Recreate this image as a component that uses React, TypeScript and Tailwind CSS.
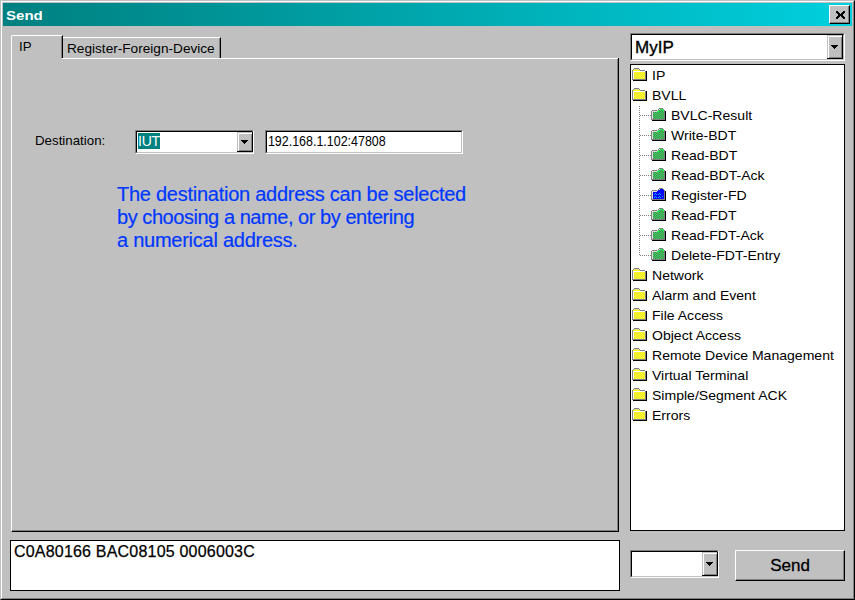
import type { ReactNode } from "react";

type Kind = "yellow" | "green" | "blue";

const tree: { label: string; kind: Kind }[] = [
  { label: "IP", kind: "yellow" },
  { label: "BVLL", kind: "yellow" },
  { label: "BVLC-Result", kind: "green" },
  { label: "Write-BDT", kind: "green" },
  { label: "Read-BDT", kind: "green" },
  { label: "Read-BDT-Ack", kind: "green" },
  { label: "Register-FD", kind: "blue" },
  { label: "Read-FDT", kind: "green" },
  { label: "Read-FDT-Ack", kind: "green" },
  { label: "Delete-FDT-Entry", kind: "green" },
  { label: "Network", kind: "yellow" },
  { label: "Alarm and Event", kind: "yellow" },
  { label: "File Access", kind: "yellow" },
  { label: "Object Access", kind: "yellow" },
  { label: "Remote Device Management", kind: "yellow" },
  { label: "Virtual Terminal", kind: "yellow" },
  { label: "Simple/Segment ACK", kind: "yellow" },
  { label: "Errors", kind: "yellow" },
];

// Every second pixel of a rectangle, as one path.
function checker(x0: number, y0: number, x1: number, y1: number) {
  let d = "";
  for (let y = y0; y < y1; y++) {
    for (let x = x0; x < x1; x++) {
      if ((x + y) % 2 === 0) d += `M${x} ${y}h1v1h-1z`;
    }
  }
  return d;
}

const yellowDither = checker(2, 4, 13, 11);
const greenDither = checker(2, 4, 13, 11) + checker(8, 2, 12, 4);

function Folder({ kind }: { kind: Kind }) {
  if (kind === "yellow") {
    return (
      <svg width="15" height="13" viewBox="0 0 15 13" shapeRendering="crispEdges" className="-mt-[2px] shrink-0">
        <path fill="#ffff00" d="M1 2h1v-1h5v1h1v1h6v9h-13z" />
        <path fill="#e8e850" d={yellowDither} />
        <path fill="#808080" d="M2 0h5v1h-5zM1 1h1v1h-1zM7 1h1v1h-1zM8 2h5v1h-5zM0 2h1v9h-1zM13 3h1v8h-1z" />
        <path fill="#fff" d="M1 3h1v8h-1zM2 3h11v1h-11z" />
        <path fill="#e0e080" d="M2 1h5v1h-5z" />
        <path fill="#000" d="M14 3h1v10h-14v-1h13z" />
        <path fill="#808080" d="M0 11h14v1h-14z" />
      </svg>
    );
  }
  return (
    <svg width="15" height="13" viewBox="0 0 15 13" shapeRendering="crispEdges" className="-mt-[2px] shrink-0">
      <path fill={kind === "blue" ? "#0000ff" : "#20f050"} d="M1 4h5v-1h1v-1h1v-1h4v1h1v1h1v8h-13z" />
      {kind === "green" && <path fill="#607060" d={greenDither} />}
      <path fill="#808080" d="M8 0h4v1h-4zM7 1h1v1h-1zM12 1h1v1h-1zM1 2h6v1h-6zM0 3h1v8h-1zM13 2h1v9h-1z" />
      <path fill="#e0e0e0" d="M1 3h5v1h-5zM1 4h1v7h-1zM6 2h1v1h-1zM7 2h1v-1h1v1h-1z" />
      {kind === "blue" && (
        <path fill="#00b0ff" d="M3 6h1v-1h1v1h1v1h-1v-1h-1v1h-1zM7 6h1v-1h1v1h1v1h-1v-1h-1v1h-1zM3 9h1v-1h1v1h1v1h-1v-1h-1v1h-1zM7 9h1v-1h1v1h1v1h-1v-1h-1v1h-1zM11 8h1v1h-1z" />
      )}
      <path fill="#000" d="M14 3h1v10h-14v-1h13z" />
      <path fill="#808080" d="M0 11h14v1h-14z" />
    </svg>
  );
}

function ArrowButton({ className = "-mr-px" }: { className?: string }) {
  return (
    <div
      className={`flex w-4 shrink-0 items-center justify-center border-r border-b border-black bg-[#c0c0c0] shadow-[inset_1px_1px_0_#c0c0c0,inset_2px_2px_0_#fff,inset_-1px_-1px_0_#808080] ${className}`}
    >
      <svg width="7" height="4" viewBox="0 0 7 4" shapeRendering="crispEdges">
        <path d="M0 0h7v1h-1v1h-1v1h-1v1h-1v-1h-1v-1h-1v-1h-1z" />
      </svg>
    </div>
  );
}

function Sunken({ className, children }: { className: string; children?: ReactNode }) {
  return (
    <div className={`border border-t-[#808080] border-l-[#808080] border-r-white border-b-white ${className}`}>
      <div className="flex h-full border border-t-black border-l-black border-r-[#c0c0c0] border-b-[#c0c0c0] bg-white">
        {children}
      </div>
    </div>
  );
}

export default function App() {
  return (
    <div className="h-[600px] w-[855px] overflow-hidden border-t border-l border-r border-b border-t-[#c0c0c0] border-l-[#c0c0c0] border-r-black border-b-black bg-[#c0c0c0] font-['Liberation_Sans',Arial,sans-serif] text-black">
      <div className="flex h-full flex-col border border-t-white border-l-white border-r-[#808080] border-b-[#808080] pt-px pl-px">
        <header className="mr-px flex h-[23px] shrink-0 items-center justify-between bg-linear-to-r from-[#008080] to-[#00d0de] pr-[2px] pl-[3px]">
          <span className="mt-[3px] origin-left scale-x-[1.13] text-[13.3px] leading-4 font-bold text-white">Send</span>
          <button className="-mt-px flex h-[19px] w-[21px] items-center justify-center border border-t-white border-l-white border-r-black border-b-black bg-[#c0c0c0] shadow-[inset_-1px_-1px_0_#808080]">
            <svg width="9" height="8" viewBox="0 0 9 8" shapeRendering="crispEdges" className="mt-px ml-px">
              <path d="M0 0h2v1h1v1h1v1h1v-1h1v-1h1v-1h2v2h-1v1h-1v2h1v1h1v2h-2v-1h-1v-1h-1v-1h-1v1h-1v1h-1v1h-2v-2h1v-1h1v-2h-1v-1h-1z" />
            </svg>
          </button>
        </header>

        <div className="flex flex-1 pl-[7px]">
          <main className="w-[610px] shrink-0 pt-[9px]">
            <div className="ml-px flex h-[23px] w-[608px] items-end text-[13.3px]">
              <div className="h-[23px] w-[52px] rounded-tl-[2px] border-t border-r border-l border-t-white border-l-white border-r-black pl-[7px] shadow-[inset_-1px_0_0_#808080]">
                <span className="block pt-[3px] leading-4">IP</span>
              </div>
              <div className="h-[21px] w-[158px] border-t border-r border-t-white border-r-black pl-[4px] shadow-[inset_-1px_0_0_#808080]">
                <span className="block origin-left scale-x-[1.025] pt-[3px] leading-4 whitespace-nowrap">Register-Foreign-Device</span>
              </div>
            </div>
            <section className="ml-px flex h-[474px] w-[608px] flex-col border-r border-b border-l border-l-white border-r-black border-b-black shadow-[inset_-1px_-1px_0_#808080]">
              <div className="ml-[50px] h-px shrink-0 bg-white" />
              <div className="mt-[71px] flex h-6 pl-[23px]">
                <label className="w-[100px] pt-[3px] text-[13.3px] leading-4">
                  Destination:
                </label>
                <Sunken className="w-[119px]">
                  <div className="flex-1 pt-px pl-px">
                    <span className="block h-4 w-[22px] bg-[#008080] text-[14px] leading-4 tracking-[-0.2px] text-white">IUT</span>
                  </div>
                  <ArrowButton />
                </Sunken>
                <Sunken className="ml-[11px] w-[198px]">
                  <span className="origin-left scale-x-[0.89] pt-px pl-px text-[14px] leading-4">192.168.1.102:47808</span>
                </Sunken>
              </div>
              <div className="mt-[29px] ml-[105px] text-[20px] leading-[23px] whitespace-nowrap text-[#0038ff] [-webkit-text-stroke:0.2px_#0038ff]">
                <p className="tracking-[-0.26px]">The destination address can be selected</p>
                <p className="tracking-[-0.45px]">by choosing a name, or by entering</p>
                <p className="tracking-[-0.25px]">a numerical address.</p>
              </div>
            </section>
            <div className="mt-2 h-[51px] w-[610px] border border-black bg-white pt-[3px] pl-[3px]">
              <span className="block text-[16px] leading-4 tracking-[0.2px] [-webkit-text-stroke:0.25px_black]">C0A80166 BAC08105 0006003C</span>
            </div>
          </main>

          <aside className="ml-[10px] w-[215px] shrink-0 pt-[7px]">
            <Sunken className="h-7 w-[215px]">
              <span className="flex-1 pt-[3px] pl-[3px] text-[17px] leading-5 [-webkit-text-stroke:0.35px_black]">MyIP</span>
              <ArrowButton className="mr-0" />
            </Sunken>
            <div className="relative mt-[3px] h-[467px] border border-black bg-white">
              <div className="absolute top-[41px] left-[8px] h-[150px] w-px bg-[repeating-linear-gradient(to_bottom,#808080_0_1px,transparent_1px_2px)]" />
              {tree.map((item) => (
                <div key={item.label} className="flex h-5 items-center pl-px">
                  {item.kind !== "yellow" && (
                    <span className="ml-[8px] h-px w-[11px] bg-[repeating-linear-gradient(to_right,#808080_0_1px,transparent_1px_2px)]" />
                  )}
                  <Folder kind={item.kind} />
                  <span className="mt-[2px] ml-[5px] origin-left scale-x-[1.056] text-[13.3px] leading-4 whitespace-nowrap">{item.label}</span>
                </div>
              ))}
            </div>
            <div className="mt-[19px] flex justify-between">
              <Sunken className="h-7 w-[89px]">
                <div className="flex-1" />
                <ArrowButton />
              </Sunken>
              <button className="h-[31px] w-[110px] border border-t-white border-l-white border-r-black border-b-black text-[17px] leading-5 shadow-[inset_-1px_-1px_0_#808080] [-webkit-text-stroke:0.3px_black]">
                Send
              </button>
            </div>
          </aside>
        </div>
      </div>
    </div>
  );
}
